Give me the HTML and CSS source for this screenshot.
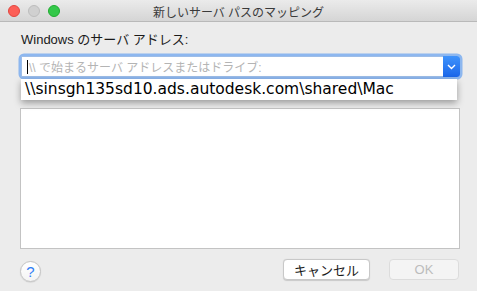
FILE: index.html
```html
<!DOCTYPE html>
<html lang="ja">
<head>
    <meta charset="UTF-8">
    <title>新しいサーバ パスのマッピング</title>
    <link rel="stylesheet" href="styles.css">
</head>
<body>
    <div class="window">
        <div class="titlebar">
            <div class="lights">
                <span class="light close"></span>
                <span class="light mini"></span>
                <span class="light zoom"></span>
            </div>
            <div class="title">新しいサーバ パスのマッピング</div>
        </div>

        <div class="content">
            <label class="field-label" for="server">Windows のサーバ アドレス:</label>
            <div class="combo">
                <div class="combo-input">
                    <span class="caret"></span>
                    <span id="server" class="placeholder">\\ で始まるサーバ アドレスまたはドライブ:</span>
                </div>
                <div class="combo-button">
                    <svg width="9" height="6" viewBox="0 0 9 6"><path d="M1 1 L4.5 4.5 L8 1" fill="none" stroke="#fff" stroke-width="1.4"/></svg>
                </div>
                <div class="popup">\\sinsgh135sd10.ads.autodesk.com\shared\Mac</div>
            </div>

            <div class="listbox"></div>

            <div class="footer">
                <button class="help">?</button>
                <div class="actions">
                    <button class="btn">キャンセル</button>
                    <button class="btn disabled">OK</button>
                </div>
            </div>
        </div>
    </div>
</body>
</html>
```

FILE: styles.css
```css
* {
    margin: 0;
    padding: 0;
    box-sizing: border-box;
    font-family: "Liberation Sans", "Noto Sans CJK JP", sans-serif;
}

body {
    background-color: #ececec;
    width: 477px;
    height: 291px;
    overflow: hidden;
}

.window {
    width: 477px;
    height: 291px;
    background-color: #ececec;
}

.titlebar {
    position: relative;
    height: 22px;
    background: linear-gradient(#ebebeb, #d5d5d5);
    border-bottom: 1px solid #b9b9b9;
    display: flex;
    align-items: center;
    justify-content: center;
}

.lights {
    position: absolute;
    left: 8px;
    top: 5px;
    display: flex;
    gap: 8px;
}

.light {
    width: 12px;
    height: 12px;
    border-radius: 50%;
}

.light.close {
    background: #fc5f57;
    border: 1px solid #e2463f;
}

.light.mini {
    background: #d0d0d0;
    border: 1px solid #bdbdbd;
}

.light.zoom {
    background: #34c84a;
    border: 1px solid #1fac30;
}

.title {
    font-size: 12px;
    color: #3a3a3a;
    padding-top: 1px;
}

.content {
    padding: 10px 17px 0 21px;
}

.field-label {
    display: block;
    font-size: 13px;
    line-height: 16px;
    color: #1a1a1a;
}

.combo {
    position: relative;
    margin-top: 8px;
    height: 21px;
    display: flex;
    box-shadow: 0 0 0 2.5px rgba(110, 165, 240, 0.75);
    border-radius: 3px;
}

.combo-input {
    flex: 1;
    background: #fff;
    border: 1px solid #9dbde8;
    border-right: none;
    display: flex;
    align-items: center;
    padding-left: 5px;
}

.caret {
    width: 1px;
    height: 14px;
    background: #000;
    margin-right: 1px;
}

.placeholder {
    font-size: 12px;
    color: #b4b4b4;
}

.combo-button {
    width: 17px;
    background: linear-gradient(#3f93fb, #1a66ea);
    border-radius: 0 3px 3px 0;
    display: flex;
    align-items: center;
    justify-content: center;
}

.popup {
    position: absolute;
    left: 0;
    top: 23px;
    width: 436px;
    height: 21px;
    background: #fff;
    box-shadow: 0 3px 7px rgba(0, 0, 0, 0.35);
    font-family: "DejaVu Sans", sans-serif;
    font-size: 15.5px;
    line-height: 21px;
    padding-left: 4px;
    color: #000;
    white-space: nowrap;
}

.listbox {
    margin-top: 31px;
    margin-left: -1px;
    width: 440px;
    height: 141px;
    background: #fff;
    border: 1px solid #c3c3c3;
}

.footer {
    margin-top: 10px;
    display: flex;
    justify-content: space-between;
    align-items: flex-start;
    width: 439px;
    margin-left: -1px;
}

.help {
    margin-top: 2px;
    width: 21px;
    height: 21px;
    border-radius: 50%;
    background: linear-gradient(#fff, #f4f4f4);
    border: 1px solid #c4c4c4;
    box-shadow: 0 0.5px 1px rgba(0, 0, 0, 0.15);
    color: #2f7ef6;
    font-size: 15px;
    line-height: 18px;
}

.actions {
    display: flex;
    gap: 19px;
}

.btn {
    width: 87px;
    height: 21px;
    background: #fff;
    border: 1px solid #c8c8c8;
    border-radius: 4px;
    box-shadow: 0 0.5px 1px rgba(0, 0, 0, 0.15);
    font-size: 13px;
    color: #1a1a1a;
}

.btn.disabled {
    width: 70px;
    background: #f4f4f4;
    border-color: #dcdcdc;
    box-shadow: none;
    color: #bcbcbc;
}
```
